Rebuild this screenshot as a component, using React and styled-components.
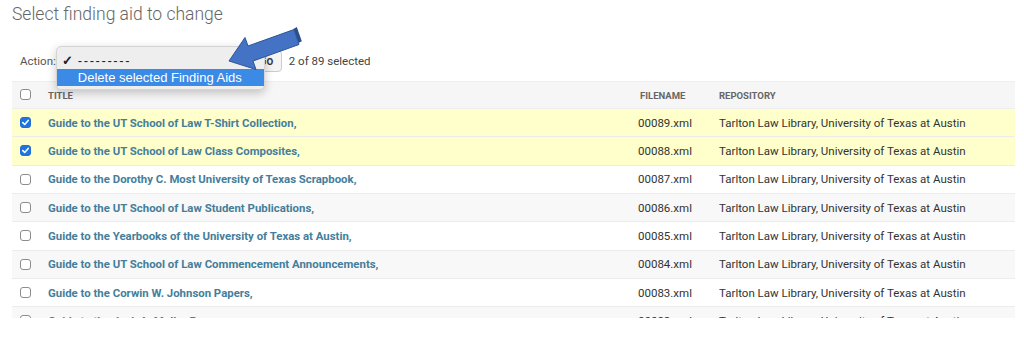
import React from "react";
import styled, { createGlobalStyle, css } from "styled-components";

const Global = createGlobalStyle`
  html, body { margin: 0; padding: 0; background: #fff; }
  body { font-family: Roboto, "Liberation Sans", Arial, sans-serif; color: #333; }
  #root { width: 1024px; height: 338px; overflow: hidden; }
`;

const Page = styled.div`
  position: relative;
  padding: 3px 9px 0 12px;
  height: 338px;
  box-sizing: border-box;
`;

const Title = styled.h1`
  margin: 0;
  font-size: 17.5px;
  font-weight: 300;
  line-height: 22px;
  color: #666;
`;

const ActionBar = styled.div`
  display: flex;
  align-items: center;
  height: 28px;
  margin-top: 22px;
  padding-left: 8px;
  font-size: 11.5px;
  color: #555;
`;

const Label = styled.span`
  margin-right: 2px;
`;

const SelectWrap = styled.div`
  position: relative;
  width: 190px;
  height: 22px;
  border: 1px solid #ccc;
  border-radius: 4px;
  box-sizing: border-box;
`;

const Menu = styled.div`
  position: absolute;
  left: -3px;
  top: -5px;
  width: 209px;
  height: 44px;
  box-sizing: border-box;
  background: #eeeeee;
  border: 1px solid #d4d4d4;
  border-radius: 5px;
  box-shadow: 0 3px 10px rgba(0, 0, 0, 0.22);
  padding-top: 5px;
  font-family: "Liberation Sans", Roboto, Arial, sans-serif;
  font-size: 13px;
  z-index: 2;
`;

const MenuItem = styled.div`
  display: flex;
  align-items: center;
  height: ${(p) => (p.$active ? "17px" : "16px")};
  padding-left: ${(p) => (p.$checked ? "5px" : "21px")};
  color: ${(p) => (p.$active ? "#fff" : "#222")};
  background: ${(p) => (p.$active ? "#3a8ae6" : "transparent")};
  margin-top: ${(p) => (p.$active ? "1px" : "0")};
`;

const Check = styled.span`
  width: 16px;
  font-size: 13px;
  font-weight: bold;
`;

const Dashes = styled.span`
  letter-spacing: 1.6px;
`;

const GoButton = styled.button`
  height: 22px;
  width: 33px;
  margin-left: 1px;
  border: 1px solid #ccc;
  border-radius: 4px;
  background: #f4f4f4;
  font-family: Roboto, sans-serif;
  font-size: 12px;
  font-weight: 500;
  color: #333;
  padding: 0 0 0 1px;
`;

const Counter = styled.span`
  margin-left: 7px;
  color: #444;
`;

const Clip = styled.div`
  margin-top: 6px;
  height: 237px;
  overflow: hidden;
`;

const Table = styled.table`
  width: 1003px;
  border-collapse: collapse;
  table-layout: fixed;
`;

const HeadRow = styled.tr`
  background: #f6f6f6;
  height: 27px;
  border-top: 1px solid #eee;
  border-bottom: 1px solid #eee;
`;

const Th = styled.th`
  text-align: left;
  font-size: 9.5px;
  font-weight: 700;
  color: #666;
  text-transform: uppercase;
  padding: 1px 0 0 ${(p) => p.$pad || "8px"};
  width: ${(p) => p.$w || "auto"};
`;

const Row = styled.tr`
  height: 28.33px;
  border-bottom: 1px solid #ececec;
  background: ${(p) => (p.$selected ? "#ffffcc" : p.$odd ? "#f8f8f8" : "#fff")};
`;

const Td = styled.td`
  padding: 0 0 0 ${(p) => p.$pad || "8px"};
  font-size: 11.5px;
  color: #333;
  white-space: nowrap;
  vertical-align: middle;
`;

const Link = styled.a`
  color: #447e9b;
  font-weight: 700;
  font-size: 11.4px;
  text-decoration: none;
`;

const Box = styled.span`
  display: inline-block;
  width: 11px;
  height: 11px;
  box-sizing: border-box;
  border-radius: 3px;
  vertical-align: middle;
  position: relative;
  top: -1px;
  ${(p) =>
    p.$checked
      ? css`
          background: #1f75e0;
          border: 1px solid #1f6fd4;
        `
      : css`
          background: #fff;
          border: 1px solid #8c8c8c;
        `}
  svg { display: block; }
`;

const Overlay = styled.svg`
  position: absolute;
  left: 0;
  top: 0;
  pointer-events: none;
  z-index: 3;
`;

function Checkbox({ checked }) {
  return (
    <Box $checked={checked}>
      {checked && (
        <svg width="9" height="9" viewBox="0 0 9 9">
          <path d="M1.8 4.6 L3.7 6.5 L7.2 2.4" fill="none" stroke="#fff" strokeWidth="1.6" strokeLinecap="round" strokeLinejoin="round" />
        </svg>
      )}
    </Box>
  );
}

const rows = [
  ["Guide to the UT School of Law T-Shirt Collection,", "00089.xml", true],
  ["Guide to the UT School of Law Class Composites,", "00088.xml", true],
  ["Guide to the Dorothy C. Most University of Texas Scrapbook,", "00087.xml", false],
  ["Guide to the UT School of Law Student Publications,", "00086.xml", false],
  ["Guide to the Yearbooks of the University of Texas at Austin,", "00085.xml", false],
  ["Guide to the UT School of Law Commencement Announcements,", "00084.xml", false],
  ["Guide to the Corwin W. Johnson Papers,", "00083.xml", false],
  ["Guide to the Jack A. Moller Papers,", "00082.xml", false],
];

export default function App() {
  return (
    <>
      <Global />
      <Page>
        <Title>Select finding aid to change</Title>
        <ActionBar>
          <Label>Action:</Label>
          <SelectWrap>
            <Menu>
              <MenuItem $checked>
                <Check>✓</Check>
                <Dashes>---------</Dashes>
              </MenuItem>
              <MenuItem $active>Delete selected Finding Aids</MenuItem>
            </Menu>
          </SelectWrap>
          <GoButton>Go</GoButton>
          <Counter>2 of 89 selected</Counter>
        </ActionBar>
        <Clip>
          <Table>
            <thead>
              <HeadRow>
                <Th $w="20px" $pad="8px">
                  <Checkbox />
                </Th>
                <Th $w="582px">Title</Th>
                <Th $w="71px" $pad="10px">Filename</Th>
                <Th>Repository</Th>
              </HeadRow>
            </thead>
            <tbody>
              {rows.map(([t, f, sel], i) => (
                <Row key={f} $selected={sel} $odd={i % 2 === 1}>
                  <Td $pad="8px">
                    <Checkbox checked={sel} />
                  </Td>
                  <Td>
                    <Link href="#">{t}</Link>
                  </Td>
                  <Td>{f}</Td>
                  <Td>Tarlton Law Library, University of Texas at Austin</Td>
                </Row>
              ))}
            </tbody>
          </Table>
        </Clip>
        <Overlay width="1024" height="100" viewBox="0 0 1024 100">
          <polygon points="293.5,28.9 298.5,43.1 301.8,41.2 296.8,27.0" fill="#2b4f8c" />
          <polygon
            points="229,61 256,69.5 253,61 299,44.5 294,29.5 248,46 245,37.5"
            fill="#4472c4"
            stroke="#2f5597"
            strokeWidth="1"
            strokeLinejoin="miter"
          />
        </Overlay>
      </Page>
    </>
  );
}
